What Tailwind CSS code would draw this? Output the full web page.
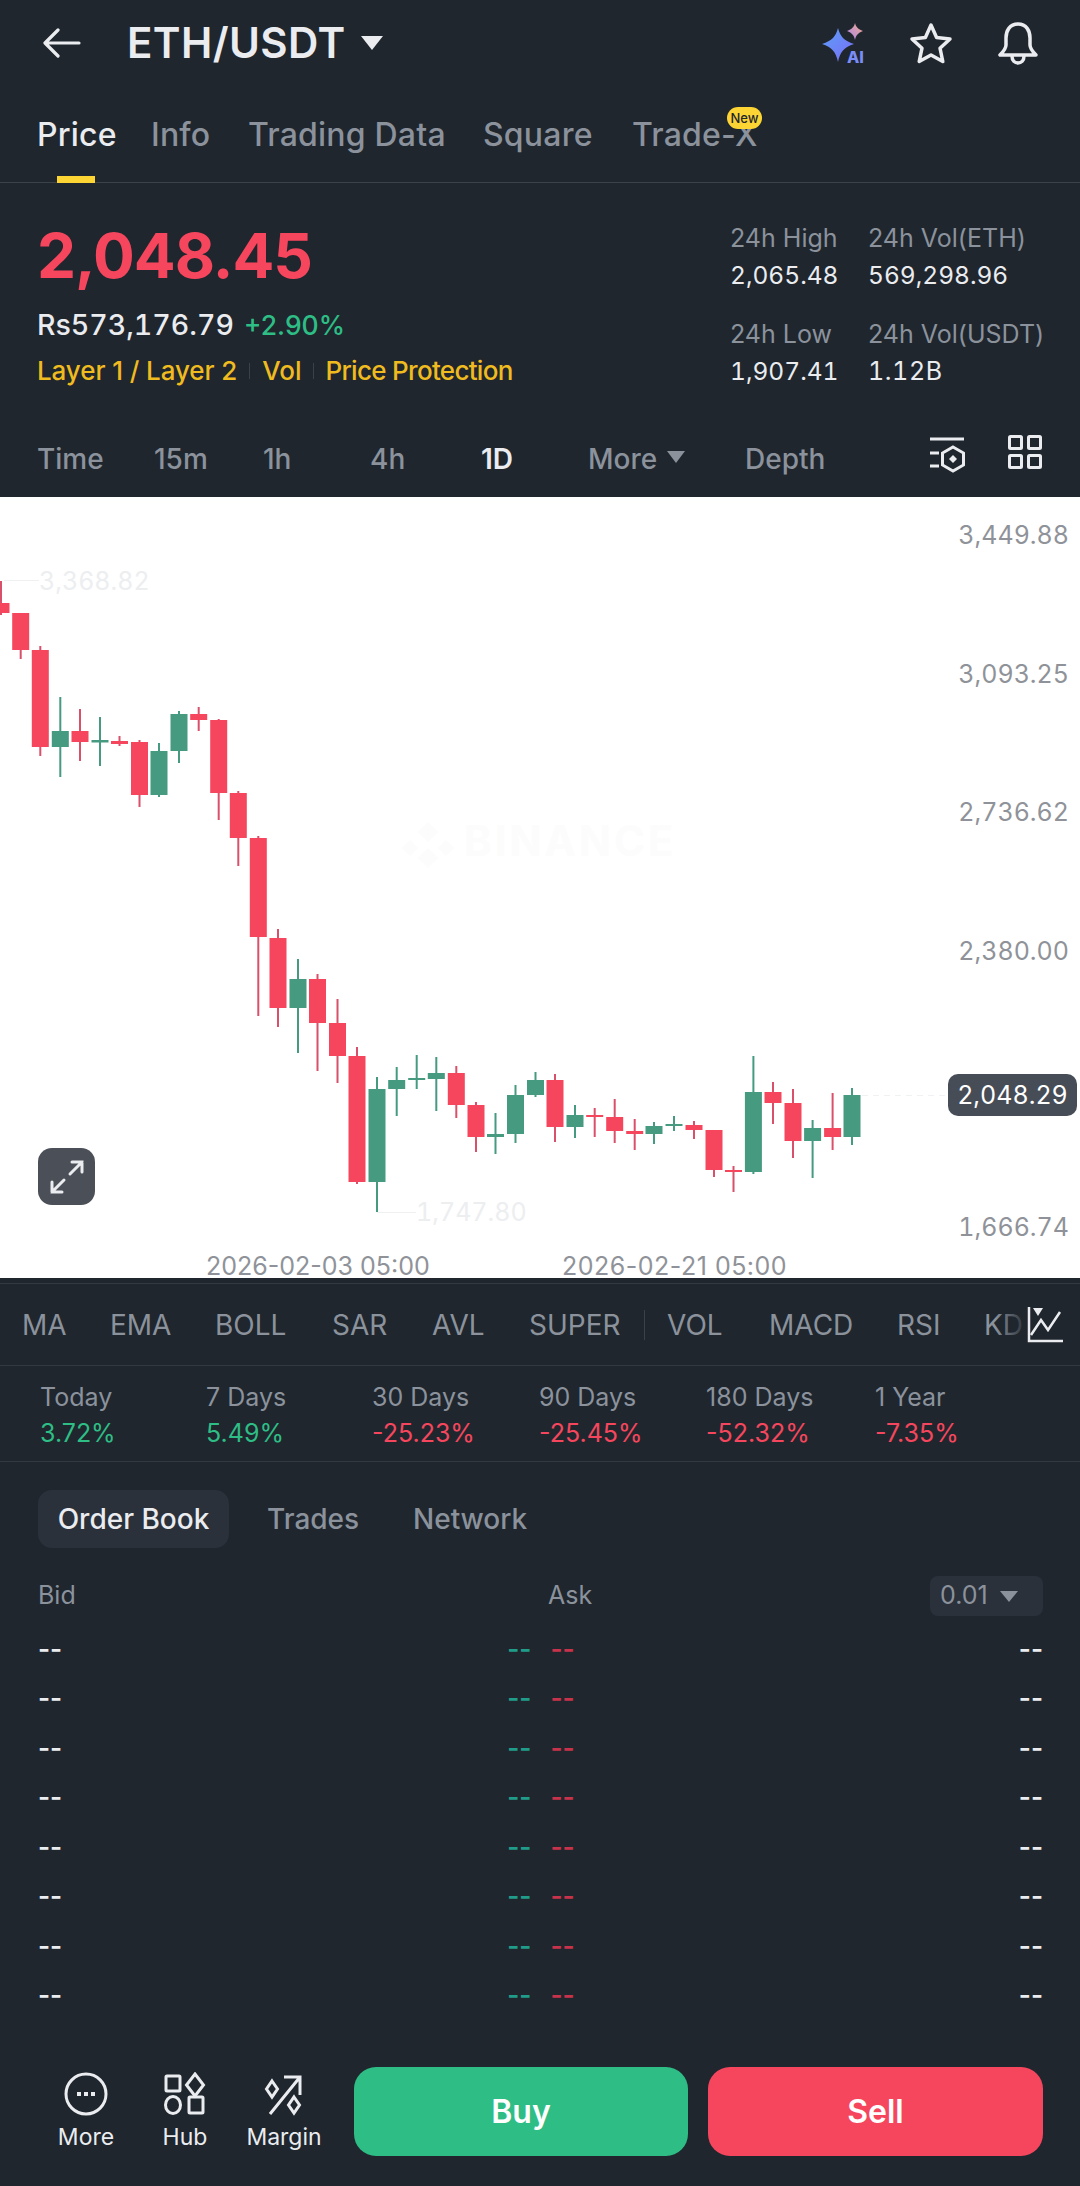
<!DOCTYPE html>
<html lang="en">
<head>
  <meta charset="UTF-8" />
  <meta name="viewport" content="width=device-width, initial-scale=1.0"/>
  <title>ETH/USDT</title>
  <script src="https://cdn.jsdelivr.net/npm/@tailwindcss/browser@4"></script>
</head>
<body class="antialiased">
  <div class="w-[1080px] h-[2186px] overflow-hidden bg-[#1f262e] text-[#eaecef] font-['Inter',sans-serif]">

    <!-- Top bar -->
    <header class="h-[86px] flex items-center pl-[43px] pr-[40px]">
      <svg width="38" height="32" viewBox="0 0 38 32" fill="none" stroke="#eaecef" stroke-width="3.2" stroke-linecap="round" stroke-linejoin="round">
        <path d="M36 16H3M15 3 2 16l13 13"/>
      </svg>
      <span class="ml-[46px] text-[42px] leading-none font-semibold tracking-[0.4px]">ETH/USDT</span>
      <svg class="ml-[15px]" width="22" height="14" viewBox="0 0 22 14"><path d="M0 0h22L11 14z" fill="#eaecef"/></svg>
      <svg class="ml-auto" width="44" height="42" viewBox="0 0 44 42">
        <defs>
          <linearGradient id="g1" x1="0" y1="0" x2="1" y2="1"><stop offset="0" stop-color="#5aa0f8"/><stop offset="1" stop-color="#7d6cf5"/></linearGradient>
          <linearGradient id="g2" x1="0" y1="1" x2="1" y2="0"><stop offset="0" stop-color="#a987f0"/><stop offset="1" stop-color="#f3a98a"/></linearGradient>
        </defs>
        <path d="M17 6c2 8 6 13 16 16-10 3-14 8-16 18-2-10-6-15-16-18 10-3 14-8 16-16z" fill="url(#g1)"/>
        <path d="M34 1c1 4 3 6 8 8-5 2-7 4-8 9-1-5-3-7-8-9 5-2 7-4 8-8z" fill="url(#g2)"/>
        <text x="26" y="41" font-size="16" font-weight="800" fill="#7a8cf6">AI</text>
      </svg>
      <svg class="ml-[44px]" width="44" height="42" viewBox="0 0 44 42" fill="none" stroke="#eaecef" stroke-width="3.5" stroke-linejoin="round">
        <path d="m22 3 5.600 12.500 13.400 1.500-10 9.200 2.800 13.300L22 33l-11.800 6.500L13 26.200 3 17l13.400-1.500z"/>
      </svg>
      <svg class="ml-[43px]" width="44" height="44" viewBox="0 0 44 44" fill="none" stroke="#eaecef" stroke-width="3.500" stroke-linecap="round" stroke-linejoin="round">
        <path d="M22 3C13.500 3 10 10 10 17v7c0 3-2 6-6 10h36c-4-4-6-7-6-10v-7C34 10 30.500 3 22 3z"/>
        <path d="M16 35c0 5 3 7 6 7s6-2 6-7"/>
      </svg>
    </header>

    <!-- Tabs -->
    <nav class="relative h-[97px] pl-[37px] flex items-start pt-[31px] border-b border-[#3a414b] text-[32px] leading-[36px] font-medium text-[#8b929c] tracking-[0.2px]">
      <span class="w-[114px] text-[#eaecef]">Price</span>
      <span class="w-[97px]">Info</span>
      <span class="w-[235px]">Trading Data</span>
      <span class="w-[149px]">Square</span>
      <span>Trade-X</span>
      <span class="absolute left-[727px] top-[21px] w-[35px] h-[22px] rounded-full bg-[#fcd535] text-[#1f262e] text-[13px] leading-[22px] font-medium text-center tracking-normal">New</span>
      <span class="absolute left-[57px] bottom-[-1px] w-[38px] h-[7px] bg-[#fcd535]"></span>
    </nav>

    <!-- Price summary -->
    <section class="h-[238px] flex pl-[37px]">
      <div class="pt-[38px]">
        <div class="text-[62px] leading-[70px] font-bold text-[#f6465d] tracking-[-1px]">2,048.45</div>
        <div class="mt-[14px] flex items-center text-[28.5px] leading-[40px] font-medium">
          <span class="tabular-nums">Rs573,176.79</span>
          <span class="ml-[10px] text-[26.5px] text-[#2ebd85]">+2.90%</span>
        </div>
        <div class="mt-[8px] flex items-center text-[26px] leading-[36px] font-medium text-[#f0bb1f]">
          <span class="tracking-[-0.1px]">Layer 1 / Layer 2</span>
          <span class="ml-[12px] w-px h-[16px] bg-[#3a414b]"></span>
          <span class="ml-[12px]">Vol</span>
          <span class="ml-[12px] w-px h-[16px] bg-[#3a414b]"></span>
          <span class="ml-[11px] tracking-[-0.7px]">Price Protection</span>
        </div>
      </div>
      <div class="ml-auto w-[350px] pt-[37px] grid grid-cols-[138px_212px] content-start text-[25px] leading-[36px]">
        <span class="text-[#8b929c]">24h High</span>
        <span class="text-[#8b929c]">24h Vol(ETH)</span>
        <span class="mt-px text-[24.5px] tabular-nums">2,065.48</span>
        <span class="mt-px text-[24.5px] tabular-nums">569,298.96</span>
        <span class="mt-[23px] text-[#8b929c]">24h Low</span>
        <span class="mt-[23px] text-[#8b929c]">24h Vol(USDT)</span>
        <span class="mt-px text-[24.5px] tabular-nums">1,907.41</span>
        <span class="mt-px tabular-nums tracking-[0.6px]">1.12B</span>
      </div>
    </section>

    <!-- Interval row -->
    <div class="h-[76px] flex items-start pl-[37px] pt-[20px] text-[28px] leading-[36px] text-[#8b929c] font-medium">
      <span class="w-[117px]">Time</span>
      <span class="w-[109px]">15m</span>
      <span class="w-[107px]">1h</span>
      <span class="w-[111px]">4h</span>
      <span class="w-[107px] text-[#eaecef] font-semibold">1D</span>
      <span class="w-[157px] flex items-center">More
        <svg class="ml-[10px] mt-[-4px]" width="18" height="12" viewBox="0 0 18 12"><path d="M0 0h18L9 12z" fill="#8b929c"/></svg>
      </span>
      <span class="w-[185px]">Depth</span>
      <svg class="-mt-[5px]" width="38" height="42" viewBox="0 0 38 42" fill="none" stroke="#eaecef" stroke-width="3">
        <path d="M0 3h34M0 17h9M0 30h9"/>
        <path d="m23 11 10.500 6v12L23 35l-10.500-6V17z"/>
        <path d="m23 19 4 4-4 4-4-4z" fill="#eaecef" stroke="none"/>
      </svg>
      <svg class="ml-[40px] -mt-[6px]" width="34" height="34" viewBox="0 0 34 34" fill="none" stroke="#eaecef" stroke-width="3">
        <rect x="1.500" y="1.500" width="12" height="12" rx="1"/><rect x="20.500" y="1.500" width="12" height="12" rx="1"/>
        <rect x="1.500" y="20.500" width="12" height="12" rx="1"/><rect x="20.500" y="20.500" width="12" height="12" rx="1"/>
      </svg>
    </div>

    <!-- Chart -->
    <div class="relative h-[781px] bg-white">
      <svg id="chart" class="block" width="1080" height="781" viewBox="0 497 1080 781" font-family="Inter, sans-serif">
        <!-- watermark -->
        <path d="M428 822l10 10-10 10-10-10zM428 848l10 10-10 10-10-10zM410 840l8 8-8 8-8-8zM446 840l8 8-8 8-8-8z" fill="#fcfcfc"/>
        <text x="464" y="856" font-size="42" font-weight="700" letter-spacing="3" fill="#fcfcfc">BINANCE</text>
        <!-- high / low markers -->
        <path d="M4 580.500h35M377 1212.500h39" stroke="#eef0f2" stroke-width="1"/>
        <text class="tabular-nums" x="39" y="590" font-size="25" fill="#eceef0">3,368.82</text>
        <text class="tabular-nums" x="416" y="1221" font-size="25" fill="#eceef0">1,747.80</text>
        <path d="M862 1095.500h86" stroke="#f0f1f3" stroke-width="1" stroke-dasharray="6 5"/>
        <!-- axis -->
        <g class="tabular-nums" font-size="25" fill="#8f9399" text-anchor="end">
          <text x="1069" y="544">3,449.88</text>
          <text x="1069" y="683">3,093.25</text>
          <text x="1069" y="821">2,736.62</text>
          <text x="1069" y="960">2,380.00</text>
          <text x="1069" y="1236">1,666.74</text>
        </g>
        <g font-size="25" fill="#8f9399">
          <text x="206" y="1275">2026-02-03 05:00</text>
          <text x="562" y="1275" letter-spacing="0.5">2026-02-21 05:00</text>
        </g>
        <g id="candles"></g>
      </svg>
      <span class="absolute left-[948px] top-[577px] w-[129px] h-[42px] rounded-[10px] bg-[#474d57] text-white text-[25px] leading-[42px] text-center tabular-nums">2,048.29</span>
      <button class="absolute left-[38px] top-[651px] w-[57px] h-[57px] rounded-[14px] bg-[#4b4f57] flex items-center justify-center">
        <svg width="36" height="36" viewBox="0 0 36 36" fill="none" stroke="#eaecef" stroke-width="3" stroke-linecap="round">
          <path d="M21 15 33 3M23 3h10v10M15 21 3 33M13 33H3V23"/>
        </svg>
      </button>
    </div>

    <!-- Indicators -->
    <div class="relative mt-[5px] h-[83px] flex items-center pl-[22px] overflow-hidden border-t border-b border-[#323943] text-[28px] text-[#8b929c]">
      <span class="shrink-0 w-[88px]">MA</span>
      <span class="shrink-0 w-[105px]">EMA</span>
      <span class="shrink-0 w-[117px]">BOLL</span>
      <span class="shrink-0 w-[100px]">SAR</span>
      <span class="shrink-0 w-[97px]">AVL</span>
      <span class="shrink-0 w-[115px]">SUPER</span>
      <span class="shrink-0 w-[23px]"><span class="block w-px h-[30px] bg-[#3a414b]"></span></span>
      <span class="shrink-0 w-[102px]">VOL</span>
      <span class="shrink-0 w-[128px]">MACD</span>
      <span class="shrink-0 w-[87px]">RSI</span>
      <span class="shrink-0">KD</span>
      <span class="absolute right-0 top-0 bottom-0 w-[85px] bg-linear-to-r from-transparent to-[#1f262e] to-[40%] flex items-center pl-[32px]">
        <svg width="38" height="36" viewBox="0 0 38 36" fill="none" stroke="#eaecef" stroke-width="2.500">
          <path d="M2 0v34h34"/>
          <path d="M4 28 14 13l7 10L33 5"/>
          <path d="M6 1h10l-5 8z" fill="#eaecef" stroke="none"/>
        </svg>
      </span>
    </div>

    <!-- Period change -->
    <div class="h-[96px] pl-[40px] pt-[13px] border-b border-[#323943] grid grid-cols-[166px_166px_167px_167px_169px_auto] content-start text-[25px] leading-[36px]">
      <div><div class="text-[#8b929c]">Today</div><div class="text-[#2ebd85]">3.72%</div></div>
      <div><div class="text-[#8b929c]">7 Days</div><div class="text-[#2ebd85]">5.49%</div></div>
      <div><div class="text-[#8b929c]">30 Days</div><div class="text-[#f6465d]">-25.23%</div></div>
      <div><div class="text-[#8b929c]">90 Days</div><div class="text-[#f6465d]">-25.45%</div></div>
      <div><div class="text-[#8b929c]">180 Days</div><div class="text-[#f6465d]">-52.32%</div></div>
      <div><div class="text-[#8b929c]">1 Year</div><div class="text-[#f6465d]">-7.35%</div></div>
    </div>

    <!-- Order book -->
    <div class="pt-[28px] pl-[38px] pr-[37px]">
      <div class="flex items-center h-[58px] text-[28px] font-medium text-[#8b929c]">
        <span class="w-[191px] h-[58px] rounded-[14px] bg-[#2a313b] text-[#eaecef] leading-[58px] text-center">Order Book</span>
        <span class="ml-[38px] w-[146px]">Trades</span>
        <span>Network</span>
      </div>
      <div class="mt-[28px] h-[40px] flex items-center text-[25px] text-[#8b929c]">
        <span class="w-[510px]">Bid</span>
        <span>Ask</span>
        <span class="ml-auto w-[113px] h-[40px] rounded-[8px] bg-[#2a313b] flex items-center pl-[10px]">0.01
          <svg class="ml-[12px]" width="18" height="11" viewBox="0 0 18 11"><path d="M0 0h18L9 11z" fill="#8b929c"/></svg>
        </span>
      </div>
      <div id="book" class="mt-[8px]"></div>
    </div>

    <!-- Bottom actions -->
    <footer class="mt-[47px] h-[89px] flex pl-[40px] pr-[37px]">
      <div class="w-[92px] flex flex-col items-center pt-[5px]">
        <svg width="44" height="44" viewBox="0 0 44 44" fill="none" stroke="#eaecef" stroke-width="3">
          <circle cx="22" cy="22" r="20"/>
          <path d="M13 20h4v4h-4zM20 20h4v4h-4zM27 20h4v4h-4z" fill="#eaecef" stroke="none"/>
        </svg>
        <span class="mt-[5px] text-[23px] leading-[32px]">More</span>
      </div>
      <div class="w-[106px] flex flex-col items-center pt-[5px]">
        <svg width="44" height="44" viewBox="0 0 44 44" fill="none" stroke="#eaecef" stroke-width="3">
          <rect x="3" y="4" width="14" height="15" rx="1"/>
          <path d="m32 2 8.500 11L32 24l-8.500-11z"/>
          <ellipse cx="10" cy="33" rx="7.500" ry="8.500"/>
          <rect x="26" y="25" width="14" height="16" rx="1"/>
        </svg>
        <span class="mt-[5px] text-[23px] leading-[32px]">Hub</span>
      </div>
      <div class="w-[92px] flex flex-col items-center pt-[5px]">
        <svg width="44" height="44" viewBox="0 0 44 44" fill="none" stroke="#eaecef" stroke-width="3">
          <path d="M8 42 38 5M22 5h16v18"/>
          <path d="m10 9 5.500 8L10 25l-5.500-8zM32 25l5.500 8-5.500 8-5.500-8z"/>
        </svg>
        <span class="mt-[5px] text-[23px] leading-[32px]">Margin</span>
      </div>
      <button class="ml-[24px] w-[334px] h-[89px] rounded-[22px] bg-[#2ebd85] text-[32px] font-semibold text-white">Buy</button>
      <button class="ml-[20px] w-[335px] h-[89px] rounded-[22px] bg-[#f6465d] text-[32px] font-semibold text-white">Sell</button>
    </footer>
  </div>

  <script>
    // --- candles: [x, body-top, body-bottom, wick-top, wick-bottom, up?]
    const candles = [
      [1,603,613,581,615,0],[20.7,613,650,613,659,0],[40.3,650,747,646,756,0],[60.3,731,747,697,777,1],
      [80,731,742,709,761,0],[100,740,742.5,717,766,1],[119.5,741,744,736,746,0],[139.5,742,795,740,807,0],
      [159,751,795,743,797,1],[179,714,751,711,763,1],[198.7,714,720,707,731,0],[218.7,720,793,719,820,0],
      [238.3,793,838,791,866,0],[258.3,838,937,836,1016,0],[278,938,1008,929,1027,0],[298,979,1008,959,1053,1],
      [317.5,979,1023,974,1071,0],[337.5,1023,1056,999,1083,0],[357,1056,1182,1047,1184,0],[377,1089,1182,1077,1212,1],
      [396.7,1080,1089,1067,1116,1],[416.7,1078,1080,1055,1089,1],[436.3,1073,1079,1057,1111,1],[456.3,1073,1105,1066,1118,0],
      [476,1105,1137,1102,1152,0],[495.5,1134,1137,1113,1154,1],[515.5,1095,1134,1085,1143,1],[535.5,1080,1095,1072,1097,1],
      [555,1080,1127,1074,1142,0],[575,1115,1127,1105,1138,1],[594.7,1115,1117,1108,1137,0],[614.7,1117,1131,1099,1143,0],
      [634.7,1131,1134,1119,1150,0],[654,1126,1134,1122,1144,1],[674,1124,1126,1116,1131,1],[694,1125,1130,1121,1139,0],
      [714,1130,1170,1130,1177,0],[733.5,1170,1172,1166,1192,0],[753.4,1092,1172,1056,1174,1],[773,1092,1103,1082,1124,0],
      [793,1103,1141,1089,1158,0],[812.6,1128,1141,1120,1178,1],[832.6,1128,1137,1093,1150,0],[852,1095,1137,1088,1145,1]
    ];
    const ns = "http://www.w3.org/2000/svg";
    const group = document.getElementById("candles");
    candles.forEach(([x, top, bottom, hi, lo, up]) => {
      const color = up ? "#459a80" : "#f6465d";
      const wick = document.createElementNS(ns, "rect");
      wick.setAttribute("x", x - 1); wick.setAttribute("y", hi);
      wick.setAttribute("width", 2); wick.setAttribute("height", lo - hi);
      wick.setAttribute("fill", up ? "#459a80" : "#d9506a");
      group.appendChild(wick);
      const body = document.createElementNS(ns, "rect");
      body.setAttribute("x", x - 8.5); body.setAttribute("y", top);
      body.setAttribute("width", 17); body.setAttribute("height", bottom - top);
      body.setAttribute("fill", color);
      group.appendChild(body);
    });

    // --- empty order book rows
    const book = document.getElementById("book");
    for (let i = 0; i < 8; i++) {
      const row = document.createElement("div");
      row.className = "h-[49.5px] flex items-center text-[26px] font-semibold leading-none";
      row.innerHTML = `
        <span class="text-[#eaecef]">--</span>
        <span class="ml-[445px] text-[#1f9d8a]">--</span>
        <span class="ml-[19px] text-[#c8324a]">--</span>
        <span class="ml-auto text-[#eaecef]">--</span>
      `;
      book.appendChild(row);
    }
  </script>
</body>
</html>
